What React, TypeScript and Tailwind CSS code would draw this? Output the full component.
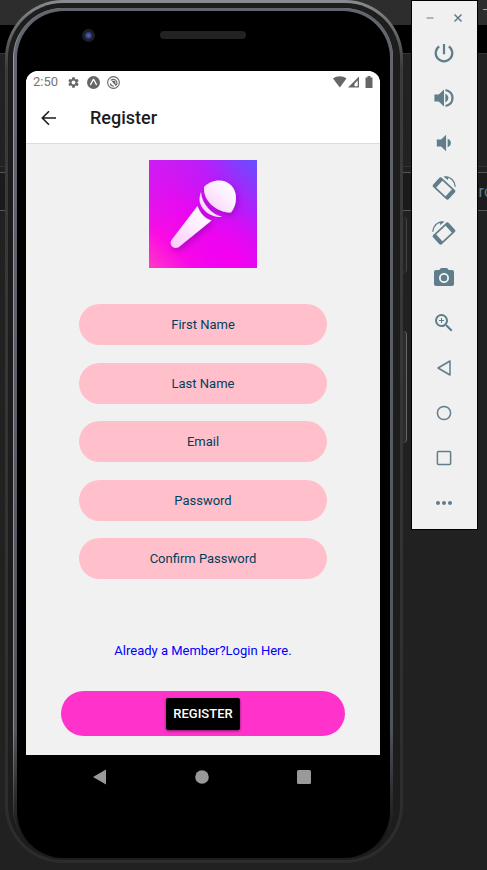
import type { ReactNode } from "react";
import { MdCameraAlt, MdMoreHoriz, MdSettings, MdZoomIn } from "react-icons/md";

function PowerIcon() {
  return (
    <svg viewBox="0 0 24 24" className="size-6" fill="none" stroke="currentColor" strokeWidth="2.200">
      <path d="M12 3v10.300M7.200 5.300a8.300 8.300 0 1 0 9.600 0" />
    </svg>
  );
}

function VolumeUpIcon() {
  return (
    <svg viewBox="0 0 24 24" className="size-6">
      <path d="M2.400 8.500h4.300L12 3.500v17l-5.300-5h-4.300z" fill="currentColor" />
      <path d="M13.300 7.800c2 .8 3 2.300 3 4.200s-1 3.400-3 4.200z" fill="currentColor" />
      <path d="M13.500 4c4.500 1 7 4.200 7 8s-2.500 7-7 8" fill="none" stroke="currentColor" strokeWidth="2.200" />
    </svg>
  );
}

function VolumeDownIcon() {
  return (
    <svg viewBox="0 0 24 24" className="size-6">
      <path d="M4.800 8.500h4.300l5-4.800v16.600l-5-4.800h-4.300z" fill="currentColor" />
      <path d="M15.600 7.800c2.200.8 3.300 2.300 3.300 4.200s-1.100 3.400-3.300 4.200z" fill="currentColor" />
    </svg>
  );
}

function RotateIcon({ mirrored = false }: { mirrored?: boolean }) {
  return (
    <svg viewBox="0 0 24 24" className={mirrored ? "size-6 -scale-x-100" : "size-6"} fill="none">
      <g transform="translate(12 12.5) rotate(43)">
        <rect x="-9.8" y="-5.500" width="19.6" height="11" rx="1.2" stroke="currentColor" strokeWidth="1.700" />
        <path d="M-9.8 -5.5h3.400v11h-3.400zM6.400 -5.5h3.400v11h-3.400z" fill="currentColor" />
      </g>
      <path d="M13 1C18.500 .6 23 5 23.300 10.800" stroke="currentColor" strokeWidth="1.300" />
      <path d="M11.200 .4l5.500 .3-.8 3.400z" fill="currentColor" />
    </svg>
  );
}

const tools: { label: string; icon: ReactNode }[] = [
  { label: "Power", icon: <PowerIcon /> },
  { label: "Volume up", icon: <VolumeUpIcon /> },
  { label: "Volume down", icon: <VolumeDownIcon /> },
  { label: "Rotate left", icon: <RotateIcon /> },
  { label: "Rotate right", icon: <RotateIcon mirrored /> },
  { label: "Take screenshot", icon: <MdCameraAlt className="size-6" /> },
  { label: "Zoom", icon: <MdZoomIn className="size-6" /> },
  {
    label: "Back",
    icon: (
      <svg viewBox="0 0 24 24" className="size-6" fill="none" stroke="currentColor" strokeWidth="1.500" strokeLinejoin="round">
        <path d="M18 5v14L6 12z" />
      </svg>
    ),
  },
  {
    label: "Home",
    icon: (
      <svg viewBox="0 0 24 24" className="size-6" fill="none" stroke="currentColor" strokeWidth="1.500">
        <circle cx="12" cy="12" r="6.600" />
      </svg>
    ),
  },
  {
    label: "Overview",
    icon: (
      <svg viewBox="0 0 24 24" className="size-6" fill="none" stroke="currentColor" strokeWidth="1.500">
        <rect x="5.400" y="5.400" width="13.200" height="13.200" rx="1" />
      </svg>
    ),
  },
  { label: "More", icon: <MdMoreHoriz className="size-6" /> },
];

const fields = [
  { label: "First Name", type: "text" },
  { label: "Last Name", type: "text" },
  { label: "Email", type: "email" },
  { label: "Password", type: "password" },
  { label: "Confirm Password", type: "password" },
];

function EditorBackdrop() {
  return (
    <div className="absolute inset-0 -z-10 overflow-hidden" aria-hidden="true">
      <div className="flex h-[25px] justify-end bg-[#2d2d2d]">
        <div className="mt-[9px] h-px w-1 bg-[#aaaaaa]" />
      </div>
      <div className="h-7 bg-black" />
      <div className="h-[114px] border-y border-[#333333] bg-[#222222]" />
      <div className="h-[5px]" />
      <div className="flex h-[39px] items-center justify-end border-y border-[#555555] bg-[#1b1b1b] text-base text-[#5c7f92]">
        <span className="-mr-1.5">ro</span>
      </div>
    </div>
  );
}

function MicLogo() {
  return (
    <svg viewBox="0 0 108 108" className="size-[108px]" role="img" aria-label="Microphone">
      <defs>
        <linearGradient id="logo-bg" x1="0" y1="1" x2="1" y2="0">
          <stop offset="0" stopColor="#ff38c4" />
          <stop offset=".2" stopColor="#fb0be4" />
          <stop offset=".45" stopColor="#e808f2" />
          <stop offset=".72" stopColor="#b61cfb" />
          <stop offset="1" stopColor="#6550ff" />
        </linearGradient>
        <radialGradient id="logo-glow" cx=".72" cy=".95" r=".5">
          <stop offset="0" stopColor="#f400f0" />
          <stop offset="1" stopColor="#f400f0" stopOpacity="0" />
        </radialGradient>
        <linearGradient id="logo-corner" x1="0" y1="0" x2=".4" y2=".4">
          <stop offset="0" stopColor="#c822f0" stopOpacity=".8" />
          <stop offset="1" stopColor="#c822f0" stopOpacity="0" />
        </linearGradient>
        <linearGradient id="mic-fill" x1="1" y1="0" x2="0" y2="1">
          <stop offset="0" stopColor="#ffffff" />
          <stop offset=".4" stopColor="#fdf0ff" />
          <stop offset="1" stopColor="#fbc8fa" />
        </linearGradient>
        <filter id="mic-shadow" x="-20%" y="-20%" width="150%" height="150%">
          <feDropShadow dx="2" dy="3" stdDeviation="3" floodColor="#7a00a0" floodOpacity=".5" />
        </filter>
      </defs>
      <rect width="108" height="108" fill="url(#logo-bg)" />
      <rect width="108" height="108" fill="url(#logo-corner)" />
      <rect width="108" height="108" fill="url(#logo-glow)" />
      <g fill="url(#mic-fill)" filter="url(#mic-shadow)">
        <path d="M55 27C59 23 64 20.500 70 20.500c10 0 17 7.500 17 17.500 0 6-2 10.500-5 14.500C69 53 54 42 55 27z" />
        <path d="M52 32c-1.500 4-2 8-1 11 3 9 13 15 22 14-10-3-20-12-21-25z" />
        <path d="M48.500 46C51 53 56 58.500 62.500 60.500L30.500 86.500c-5 4-11-1-8-6.500z" />
      </g>
    </svg>
  );
}

function StatusBar() {
  return (
    <div className="flex h-[22px] items-center justify-between px-[7px] text-[#666666]">
      <div className="flex items-center gap-[7px]">
        <span className="mr-[2px] text-[13px] leading-4 text-[#757575]">2:50</span>
        <MdSettings className="size-[13px]" />
        <svg viewBox="0 0 14 14" className="size-[13px]">
          <circle cx="7" cy="7" r="7" fill="currentColor" />
          <path d="M7 4.800L4.300 10 3 9.300C4.500 6.500 5.500 4.500 6.200 3.500c.4-.6 1.200-.6 1.600 0C8.500 4.500 9.500 6.500 11 9.300l-1.300.7z" fill="#ffffff" />
        </svg>
        <svg viewBox="0 0 14 14" className="size-[13px]" fill="none" stroke="currentColor">
          <circle cx="7" cy="7" r="6.300" strokeWidth="1.200" />
          <path d="M4 4.800C6 3 9.500 3.300 10.500 6c.6 2-.3 3.500-1.500 4.300M3.500 8c.5 2 2 3 3.800 3" strokeWidth="1.200" />
          <path d="M6.500 6.500l3 3M5.500 5.800h2.800v2.500" strokeWidth="1.500" />
        </svg>
      </div>
      <svg viewBox="0 0 40 12" className="h-3 w-10" fill="currentColor">
        <path d="M0 2.500C4 -.6 9.500 -.6 13.500 2.500L6.800 11.500z" />
        <path fillRule="evenodd" d="M26 .5V11.500H15zM24.700 4.500l-3.200 3.200v2.600h3.200z" />
        <path d="M34.500 0h3v1.500H39.500V12h-7V1.500h2z" />
      </svg>
    </div>
  );
}

function RegisterScreen() {
  return (
    <main className="overflow-hidden rounded-t-[12px] bg-[#f1f1f1]">
      <div className="border-b border-[#dcdcdc] bg-white">
        <StatusBar />
        <header className="flex h-[50px] items-center gap-8 pl-[14px]">
          <button type="button" aria-label="Go back" className="text-[#1c1c1e]">
            <svg viewBox="0 0 18 18" className="block size-[18px]" fill="none" stroke="currentColor" strokeWidth="1.600">
              <path d="M16 9H2.500M9 2.300L2.300 9 9 15.700" />
            </svg>
          </button>
          <h1 className="text-lg font-medium text-[#1c1c1e]">Register</h1>
        </header>
      </div>
      <form className="flex flex-col items-center pt-4 pb-[19px]" onSubmit={(e) => e.preventDefault()}>
        <MicLogo />
        <div className="mt-9 flex h-[275px] w-[70%] flex-col justify-between">
          {fields.map((f) => (
            <input
              key={f.label}
              type={f.type}
              aria-label={f.label}
              placeholder={f.label}
              className="h-[41px] w-full rounded-full bg-[#ffc0cb] text-center text-[13px] text-[#003f5c] outline-none placeholder:text-[#003f5c]"
            />
          ))}
        </div>
        <a href="#login" className="mt-16 text-[13px] leading-4 text-[#0000ff]">
          Already a Member?Login Here.
        </a>
        <div className="mt-8 flex h-[45px] w-4/5 items-center justify-center rounded-full bg-[#ff33cc]">
          <button
            type="submit"
            className="h-8 rounded-[2px] bg-black px-[7px] text-[13px] font-medium text-white shadow-[0_1px_3px_rgba(0,0,0,0.5)]"
          >
            REGISTER
          </button>
        </div>
      </form>
    </main>
  );
}

function Phone() {
  return (
    <div className="relative min-w-0 flex-1">
      <div className="rounded-[58px] bg-linear-to-b from-[#8a8d90] via-[#3c3c3c] via-8% to-[#2c2c2c] p-[3px]">
        <div className="rounded-[55px] bg-[#1d1d1d] pt-[5px] pr-[7px] pb-[2px] pl-[5px]">
          <div className="rounded-[50px] bg-linear-to-b from-[#9a9fa8] via-[#8a8f98] via-85% to-[#1d1d1d] to-98% pl-px">
            <div className="rounded-[49px] bg-linear-to-b from-[#63666e] via-[#50545b] via-85% to-[#141414] to-98% pt-[3px] pr-[3px] pl-[3px]">
              <div className="rounded-[47px] bg-black pr-[10px] pl-[9px]">
                <div className="grid h-[60px] grid-cols-[1fr_86px_1fr] items-center pb-3">
                  <div className="ml-14 flex size-[13px] items-center justify-center rounded-full bg-[#1e1f26]">
                    <div className="size-[7px] rounded-full bg-radial from-[#5a6cc0] to-[#141c4a]" />
                  </div>
                  <div className="h-2 rounded-full bg-[#222222]" />
                </div>
                <RegisterScreen />
                <nav className="flex h-[103px] items-start justify-between pt-[14px] pr-[68px] pl-[66px] text-[#999999]">
                  <button type="button" aria-label="Back">
                    <svg viewBox="0 0 16 16" className="block size-4" fill="currentColor">
                      <path d="M14 .5v15L1 8z" />
                    </svg>
                  </button>
                  <button type="button" aria-label="Home">
                    <svg viewBox="0 0 16 16" className="block size-4" fill="currentColor">
                      <circle cx="8" cy="8" r="6.800" />
                    </svg>
                  </button>
                  <button type="button" aria-label="Overview">
                    <svg viewBox="0 0 16 16" className="block size-4" fill="currentColor">
                      <rect x="1" y="1" width="14" height="14" rx="1.500" />
                    </svg>
                  </button>
                </nav>
              </div>
            </div>
          </div>
        </div>
      </div>
      <div className="absolute top-[217px] left-full h-14 w-1 rounded-r-sm border-r border-[#444444] bg-[#242424]" />
      <div className="absolute top-[331px] left-full h-28 w-1 rounded-r-sm border-r border-[#666666] bg-[#2c2c2c]" />
    </div>
  );
}

function Toolbar() {
  return (
    <aside className="flex w-[67px] shrink-0 flex-col border border-black bg-[#f0f0f0] pr-px pb-1 text-[#607d8b]">
      <div className="flex h-[29px] items-center justify-between px-3 pt-[5px]">
        <button type="button" aria-label="Minimize">
          <svg viewBox="0 0 12 12" className="block size-3" stroke="#90a4ae" strokeWidth="1.500">
            <path d="M2.500 6h7" />
          </svg>
        </button>
        <button type="button" aria-label="Close">
          <svg viewBox="0 0 12 12" className="block size-3" stroke="currentColor" strokeWidth="1.500">
            <path d="M2.500 2.500l7 7M9.500 2.500l-7 7" />
          </svg>
        </button>
      </div>
      {tools.map((t) => (
        <button key={t.label} type="button" aria-label={t.label} className="flex h-[45px] items-center justify-center">
          {t.icon}
        </button>
      ))}
    </aside>
  );
}

export default function App() {
  return (
    <div className="relative isolate flex min-h-screen items-start gap-2 bg-[#212121] pr-[9px] pl-[5px] font-[Roboto,sans-serif]">
      <EditorBackdrop />
      <Phone />
      <Toolbar />
    </div>
  );
}
